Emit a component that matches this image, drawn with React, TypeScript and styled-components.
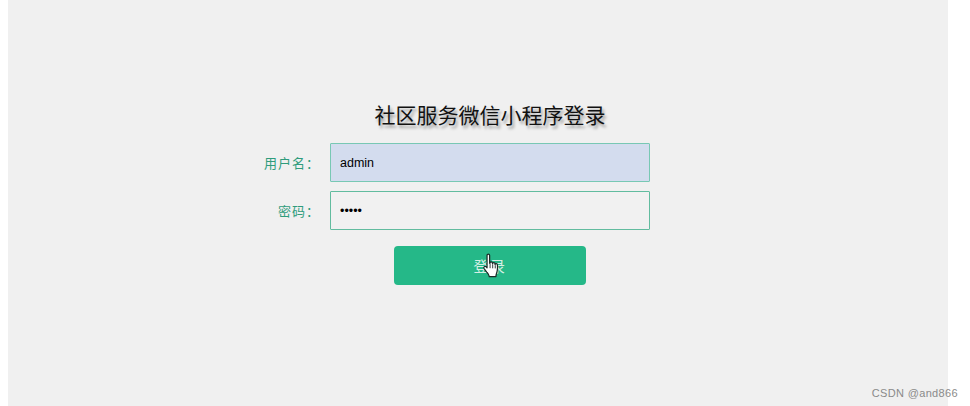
import styled, { createGlobalStyle } from "styled-components";

const GlobalStyle = createGlobalStyle`
  html, body {
    margin: 0;
    padding: 0;
    background: #fff;
  }
`;

const Page = styled.div`
  width: 970px;
  height: 406px;
  padding-left: 8px;
  box-sizing: border-box;
  overflow: hidden;
  position: relative;
  font-family: "Liberation Sans", "Noto Sans CJK SC", sans-serif;
`;

const Panel = styled.main`
  width: 940px;
  height: 406px;
  background: #f0f0f0;
  padding: 102px 0 0 241px;
  box-sizing: border-box;
`;

const Form = styled.form`
  width: 401px;
  display: flex;
  flex-direction: column;
`;

const Title = styled.h1`
  margin: 0 0 13px 81px;
  height: 28px;
  line-height: 28px;
  font-size: 21px;
  font-weight: 400;
  color: #111;
  text-align: center;
  text-shadow: 2px 3px 3px rgba(0, 0, 0, 0.35);
`;

const Row = styled.div`
  display: flex;
  align-items: center;
  gap: 10px;
  margin-bottom: 9px;
`;

const Label = styled.label`
  width: 71px;
  text-align: right;
  font-size: 13px;
  letter-spacing: 1px;
  color: #2f9c7c;
  white-space: nowrap;
`;

const Field = styled.input<{ $filled?: boolean }>`
  width: 320px;
  height: 39px;
  box-sizing: border-box;
  padding: 0 9px;
  border: 1.5px solid ${(p) => (p.$filled ? "#78c8b4" : "#62bc9f")};
  border-radius: 1px;
  outline: none;
  font-family: inherit;
  font-size: 12.5px;
  color: #000;
  background: ${(p) => (p.$filled ? "#d3dcee" : "#f1f1f1")};
`;

const Submit = styled.button`
  position: relative;
  width: 192px;
  height: 39px;
  margin: 7px 0 0 145px;
  border: none;
  border-radius: 4px;
  background: #25b888;
  color: #d5efe5;
  font-family: inherit;
  font-size: 15px;
  letter-spacing: 1.5px;
`;

const Pointer = styled.svg`
  position: absolute;
  left: 89px;
  top: 7px;
  width: 18px;
  height: 27px;
`;

const Watermark = styled.span`
  position: absolute;
  right: 12px;
  bottom: 7px;
  font-size: 11px;
  letter-spacing: 0.35px;
  color: #8a8a8a;
`;

export default function App() {
  return (
    <Page>
      <GlobalStyle />
      <Panel>
        <Form onSubmit={(e) => e.preventDefault()}>
          <Title>社区服务微信小程序登录</Title>
          <Row>
            <Label>用户名：</Label>
            <Field $filled defaultValue="admin" />
          </Row>
          <Row>
            <Label>密码：</Label>
            <Field type="password" defaultValue="admin" />
          </Row>
          <Submit type="submit">
            登录
            <Pointer viewBox="0 0 16 24" aria-hidden="true">
              <path
                d="M3.6 2.2c0-1.5 2.3-1.5 2.3 0v7l.3-.2c0-1.5 2.1-1.4 2.2 0l.1.4c.2-1.3 2.1-1.2 2.2.2v.6c.3-1.2 2-1 2.1.3.2 2 .2 4.500-.5 6.700-.4 1.300-.8 2.300-.8 3.700H5.600c-.3-1.600-1.200-2.600-2.300-4L1 13.800c-.9-1.300.8-2.700 1.900-1.500l.7.800V2.200z"
                fill="#fff"
                stroke="#1c2b27"
                strokeWidth="1.1"
                strokeLinejoin="round"
              />
              <path d="M6.300 9.500v4M8.600 10v3.600M10.900 10.800v2.900" stroke="#1c2b27" strokeWidth="0.8" fill="none" />
            </Pointer>
          </Submit>
        </Form>
      </Panel>
      <Watermark>CSDN @and866</Watermark>
    </Page>
  );
}
